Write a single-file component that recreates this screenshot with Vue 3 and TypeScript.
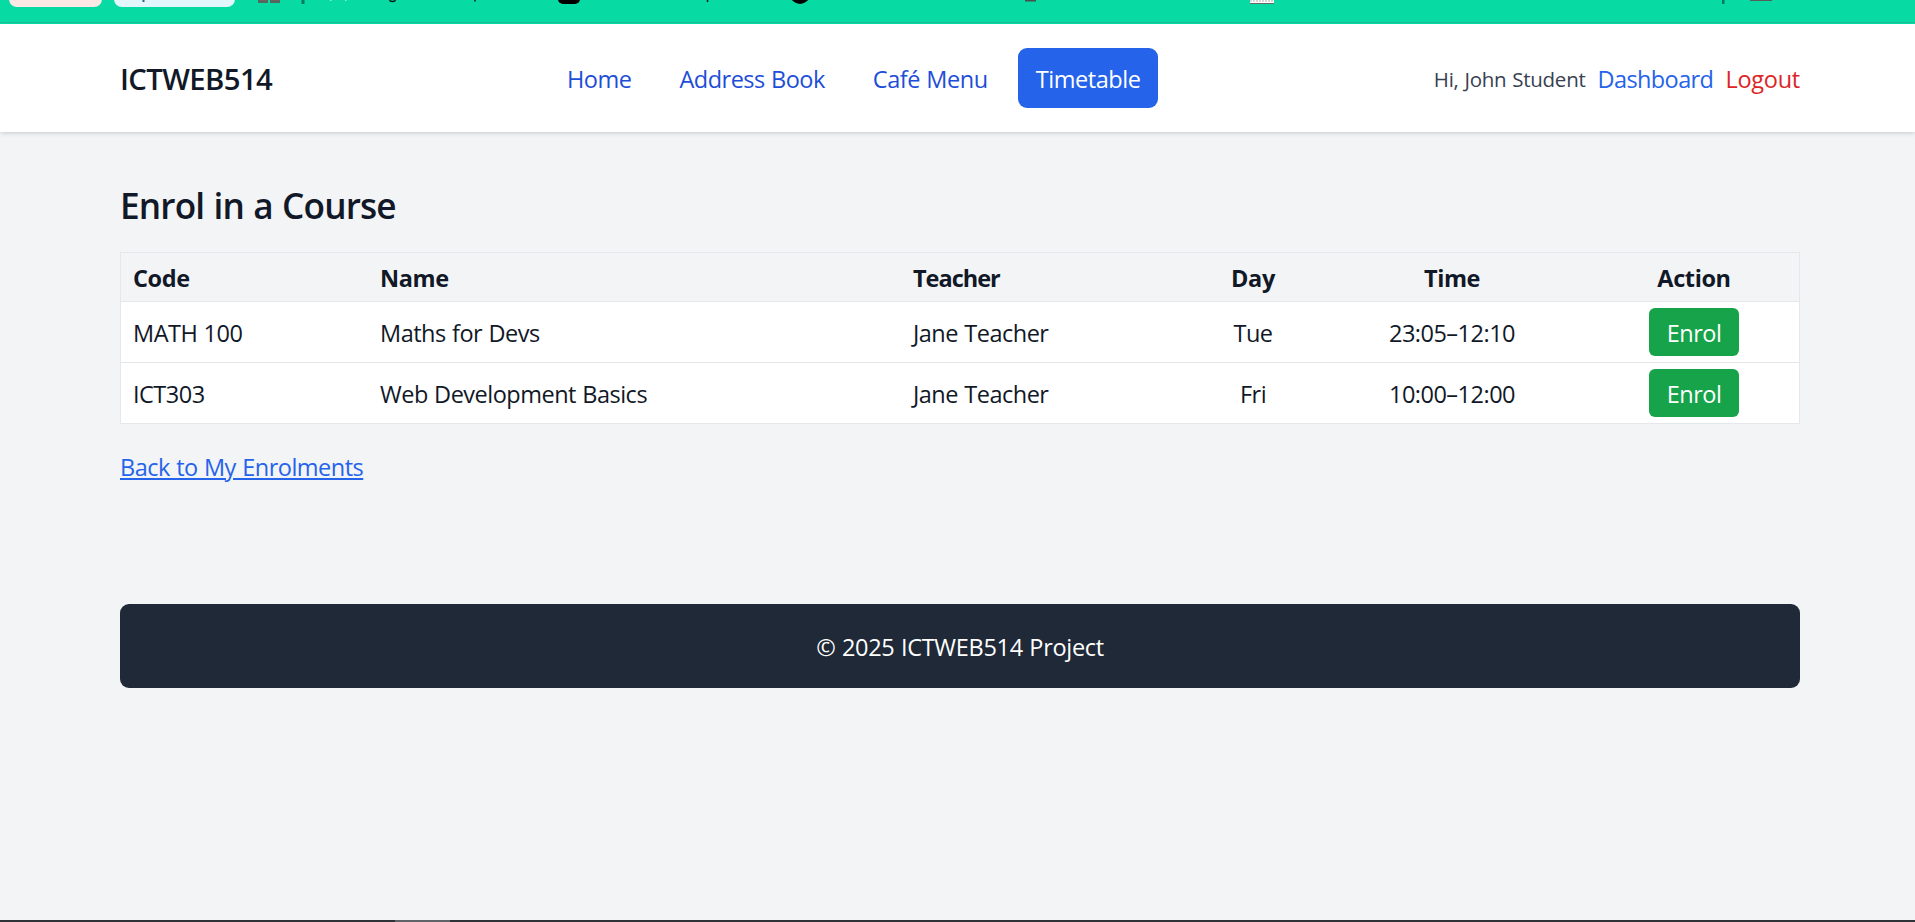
<script setup lang="ts">
interface NavItem { label: string; id: string; active?: boolean }
interface Course { code: string; name: string; teacher: string; day: string; time: string }

const nav: NavItem[] = [
  { label: 'Home', id: 'home' },
  { label: 'Address Book', id: 'address' },
  { label: 'Café Menu', id: 'cafe' },
  { label: 'Timetable', id: 'timetable', active: true },
]
const courses: Course[] = [
  { code: 'MATH 100', name: 'Maths for Devs', teacher: 'Jane Teacher', day: 'Tue', time: '23:05–12:10' },
  { code: 'ICT303', name: 'Web Development Basics', teacher: 'Jane Teacher', day: 'Fri', time: '10:00–12:00' },
]
</script>

<template>
  <div class="page">
    <svg class="browser-edge" width="1915" height="24" viewBox="0 0 1915 24" aria-hidden="true">
      <rect width="1915" height="24" fill="#07daa3" />
      <rect y="22" width="1915" height="1" fill="#18c196" />
      <rect x="9" y="-20" width="93" height="27" rx="8" fill="#fde8e6" />
      <rect x="114" y="-20" width="121" height="27" rx="8" fill="#e3f6fb" />
      <path d="M142.500 0h2v2h-2z" fill="#27687c" />
      <path d="M259 -5h8v7h-8zM271 -5h8v7h-8z" fill="#6d6259" stroke="#51695f" stroke-width="2" />
      <path d="M301.500 0h3v4h-3zM1722 0h2.500v4h-2.500z" fill="#087a5d" />
      <path d="M330 0h1.500v1h-1.500zM345 0h1.500v1h-1.500z" fill="#9be9d0" />
      <path d="M389.500 0Q390 1.500 392.500 1.500T395.500 0M475 0v1.500M707.500 0v2" fill="none" stroke="#041c17" stroke-width="1.500" />
      <rect x="558" y="-18" width="22" height="22" rx="5" />
      <circle cx="800" cy="-6" r="10" />
      <path d="M1025 0h11v1.500h-11z" fill="#48504e" />
      <path d="M1250 0h24v3h-24z" fill="#fff" />
      <path d="M1250 1h24" fill="none" stroke="#aaa" stroke-dasharray="2 1" />
      <path d="M1250 3h24v1h-24z" fill="#666" />
      <path d="M1750 0h22v1h-22z" fill="#555d58" />
    </svg>
    <header class="header">
      <div class="container bar">
        <div class="brand">ICTWEB514</div>
        <nav class="nav">
          <a v-for="n in nav" :key="n.id" :class="['nav-link', n.id, { active: n.active }]">{{ n.label }}</a>
        </nav>
        <div class="user">
          <span class="hello">Hi, John Student</span>
          <a class="dash">Dashboard</a>
          <a class="logout">Logout</a>
        </div>
      </div>
    </header>
    <main class="container main">
      <h1>Enrol in a Course</h1>
      <table>
        <colgroup>
          <col class="c-code" /><col class="c-name" /><col class="c-teacher" /><col class="c-day" /><col class="c-time" /><col class="c-action" />
        </colgroup>
        <thead>
          <tr><th>Code</th><th>Name</th><th class="teacher-head">Teacher</th><th class="mid">Day</th><th class="mid">Time</th><th class="mid">Action</th></tr>
        </thead>
        <tbody>
          <tr v-for="c in courses" :key="c.code">
            <td>{{ c.code }}</td><td>{{ c.name }}</td><td>{{ c.teacher }}</td>
            <td class="mid">{{ c.day }}</td><td class="mid time">{{ c.time }}</td>
            <td class="mid action"><button type="button">Enrol</button></td>
          </tr>
        </tbody>
      </table>
      <a class="back">Back to My Enrolments</a>
      <footer>© 2025 ICTWEB514 Project</footer>
    </main>
    <div class="taskbar"><i></i></div>
  </div>
</template>

<style>
body { margin: 0; overflow: hidden; }
</style>
<style scoped>
* { box-sizing: border-box; }
.page { height: 922px; display: flex; flex-direction: column; background: #f3f4f6; color: #111827; font: 23.5px/36px "Open Sans", "Noto Sans", sans-serif; letter-spacing: -0.5px; word-spacing: 0.7px; white-space: nowrap; }
.browser-edge { display: block; flex: none; }
.header { flex: none; height: 108px; background: #fff; box-shadow: 0 1.5px 4.5px rgba(0,0,0,.1), 0 1.5px 3px -1.5px rgba(0,0,0,.1); }
.container { width: 1680px; margin-left: 120px; }
.bar { height: 108px; display: flex; align-items: center; }
.brand { width: 429px; padding-top: 2px; font-size: 29.3px; font-weight: 600; line-height: 42px; letter-spacing: -0.6px; }
.nav { display: flex; gap: 12px; width: 760px; }
.nav-link { height: 60px; padding: 13px 18px 11px; border-radius: 9px; color: #1d4ed8; }
.cafe { letter-spacing: -0.45px; }
.nav-link.active { background: #2563eb; color: #fff; letter-spacing: -0.45px; }
.user { margin-left: auto; padding-top: 2px; display: flex; align-items: center; gap: 12px; }
.hello { font-size: 20.5px; color: #374151; letter-spacing: -0.25px; }
.dash { color: #2563eb; letter-spacing: -0.6px; }
.logout { color: #dc2626; letter-spacing: -0.25px; }
.main { padding-top: 48px; display: flex; flex-direction: column; align-items: flex-start; }
h1 { margin: 1px 0 23px; font-size: 35.2px; line-height: 48px; font-weight: 600; letter-spacing: -0.85px; word-spacing: 1px; }
table { width: 1680px; table-layout: fixed; border-collapse: separate; border-spacing: 0; border: 1px solid #e5e7eb; background: #fff; }
th { height: 49px; padding: 1px 12px 0; background: #f3f4f6; text-align: left; font-weight: 700; letter-spacing: -0.4px; border-bottom: 1px solid #e5e7eb; }
.teacher-head { letter-spacing: -1px; }
td { height: 61px; padding: 2px 12px 0; border-bottom: 1px solid #e5e7eb; }
td.action { padding-top: 0; }
tr:last-child td { border-bottom: 0; height: 60px; }
.mid { text-align: center; }
.c-code { width: 247px; }
.c-name { width: 533px; }
.c-teacher { width: 290px; }
.c-day { width: 124px; }
.c-time { width: 274px; }
.c-action { width: 210px; }
button { display: block; width: 90px; height: 48px; margin: 0 auto; padding: 2px 0 0; border: 0; border-radius: 6px; background: #16a34a; color: #fff; font: inherit; letter-spacing: inherit; }
.back { margin-top: 25px; color: #2563eb; text-decoration: underline; text-decoration-thickness: 2px; text-underline-offset: 2px; }
footer { width: 1680px; height: 84px; margin-top: 119px; padding-top: 25px; border-radius: 9px; background: #1f2937; color: #fff; text-align: center; letter-spacing: -0.3px; }
.taskbar { flex: none; height: 2px; margin-top: auto; background: #2f3338; }
.taskbar i { display: block; width: 55px; height: 2px; margin-left: 395px; background: #606469; }
</style>
